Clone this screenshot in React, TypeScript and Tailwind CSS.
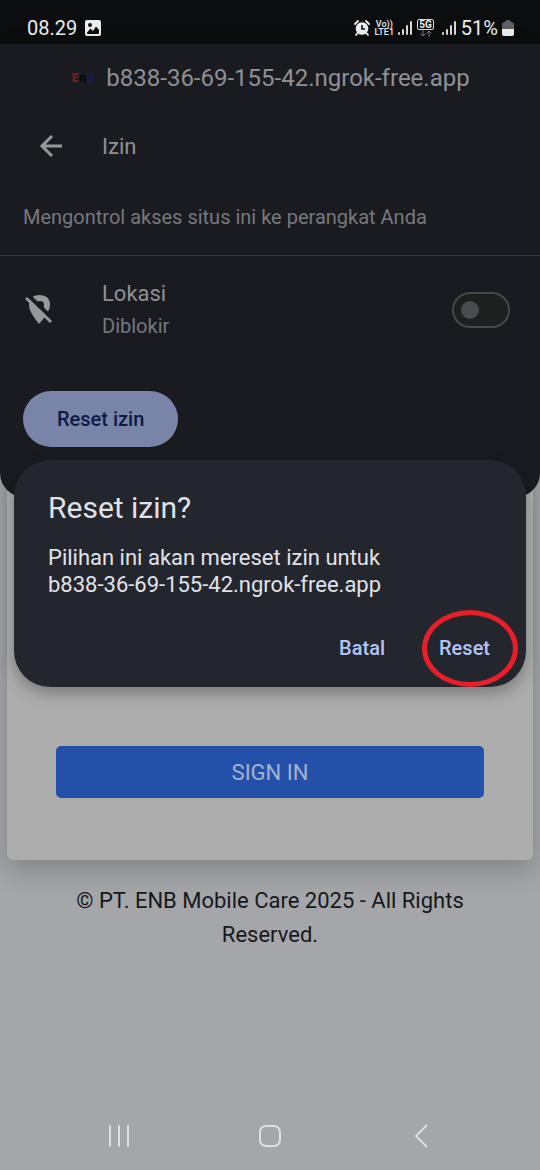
import React from "react";

const SignalBars: React.FC = () => (
  <svg width="15" height="16" viewBox="0 0 15 16" fill="#d6d7d9" aria-hidden="true">
    <rect x="0" y="12" width="2" height="3" rx="1" />
    <rect x="4" y="9" width="2" height="6" rx="1" />
    <rect x="8" y="5" width="2" height="10" rx="1" />
    <rect x="12" y="1" width="2" height="14" rx="1" />
  </svg>
);

const StatusBar: React.FC = () => {
  return (
    <header className="flex h-11 items-end justify-between bg-[#0b0d0f] pr-[26px] pb-1 pl-[27px] text-[#eceded]">
      <div className="flex h-6 items-center gap-2">
        <span className="text-xl">08.29</span>
        <svg width="16" height="16" viewBox="0 0 16 16" aria-hidden="true">
          <rect width="16" height="16" rx="2" fill="#eceded" />
          <circle cx="5" cy="5" r="2" fill="#0b0d0f" />
          <path d="M2 12.5 L5.5 8.5 L8 11 L11 6.5 L14 10 V13 Q14 14 13 14 H3 Q2 14 2 13 Z" fill="#0b0d0f" />
        </svg>
      </div>
      <div className="flex h-6 items-center">
        <svg width="16" height="16" viewBox="0 0 16 16" aria-hidden="true">
          <circle cx="8" cy="8.5" r="6.3" fill="#eceded" />
          <path
            d="M1 4 L4 1 M15 4 L12 1 M3.6 13 L2 15 M12.4 13 L14 15"
            stroke="#eceded"
            strokeWidth="1.8"
            strokeLinecap="round"
          />
          <path d="M8 5 V9 H11" stroke="#0b0d0f" strokeWidth="1.6" fill="none" />
        </svg>
        <span className="mr-1 ml-1 flex w-5 flex-col items-center text-[9px] leading-[8px] font-medium">
          <span>Vo))</span>
          <span>LTE1</span>
        </span>
        <SignalBars />
        <span className="mr-2 ml-1 flex flex-col items-center">
          <span className="rounded-xs border border-[#d6d7d9] px-px text-[10px] leading-[9px] font-bold">5G</span>
          <svg width="12" height="7" viewBox="0 0 12 7" fill="none" stroke="#77797c" aria-hidden="true">
            <path d="M3 0 V6 M0.5 3.5 L3 6 L5.5 3.5 M9 7 V1 M6.5 3.5 L9 1 L11.5 3.5" />
          </svg>
        </span>
        <SignalBars />
        <span className="ml-1 text-xl">51%</span>
        <svg className="ml-1" width="12" height="16" viewBox="0 0 12 16" aria-hidden="true">
          <path d="M3 2 Q3 0 6 0 Q9 0 9 2 Q12 2 12 5 V9 H0 V5 Q0 2 3 2 Z" fill="#5d5f62" />
          <path d="M0 9 H12 V14 Q12 16 10 16 H2 Q0 16 0 14 Z" fill="#eceded" />
        </svg>
      </div>
    </header>
  );
};

const PermissionSheet: React.FC = () => {
  return (
    <section className="absolute inset-x-0 top-0 rounded-b-3xl bg-[#1a1b20] pb-[50px] text-[#8f9094]">
      <div className="flex h-[68px] items-center justify-center gap-2.5">
        <span
          className="flex w-[26px] items-center justify-center text-[13px] leading-3 font-black"
          role="img"
          aria-label="ENB"
        >
          <span className="text-[#6e2024]">E</span>
          <span className="text-[#08080a]">n</span>
          <span className="text-[#171a50]">B</span>
        </span>
        <span className="text-2xl">b838-36-69-155-42.ngrok-free.app</span>
      </div>
      <div className="flex h-[68px] items-center gap-9 pl-9">
        <button type="button" aria-label="Kembali" className="flex size-[30px] items-center justify-center">
          <svg width="24" height="24" viewBox="0 0 24 24" fill="none" stroke="#97989b" strokeWidth="3" aria-hidden="true">
            <path d="M23 12 H3 M13 2 L3 12 L13 22" />
          </svg>
        </button>
        <h1 className="text-[22px]">Izin</h1>
      </div>
      <p className="border-b border-[#35363b] pt-6 pb-6 pl-[23px] text-xl leading-[27px] text-[#77787c]">
        Mengontrol akses situs ini ke perangkat Anda
      </p>
      <div className="flex items-center pt-[22px] pr-[30px] pl-[25px]">
        <svg width="28" height="30" viewBox="0 0 28 30" aria-hidden="true">
          <path d="M14 0 Q25 0 25 10 Q25 17 14 29 Q4 17 4 10 Q4 0 14 0 Z" fill="#97989b" />
          <circle cx="15" cy="10" r="4" fill="#1a1b20" />
          <path d="M3 0 H9 L5 4 Z" fill="#1a1b20" />
          <path d="M4 1 L29 25" stroke="#1a1b20" strokeWidth="4" />
          <path d="M1 3 L26 27" stroke="#97989b" strokeWidth="3" />
        </svg>
        <label htmlFor="lokasi" className="ml-[49px] flex-1">
          <span className="block text-[22px] leading-8">Lokasi</span>
          <span className="block text-xl leading-8 text-[#77787c]">Diblokir</span>
        </label>
        <input
          id="lokasi"
          type="checkbox"
          role="switch"
          className="h-9 w-[58px] appearance-none rounded-full border-2 border-[#47484c] bg-[#1e201f] before:mt-[7px] before:ml-[7px] before:block before:size-[18px] before:rounded-full before:bg-[#4b4c51]"
        />
      </div>
      <button
        type="button"
        className="mt-[49px] ml-[23px] h-14 rounded-full bg-[#7984a9] px-[34px] text-xl font-medium text-[#0e1a47]"
      >
        Reset izin
      </button>
    </section>
  );
};

const ResetDialog: React.FC = () => {
  return (
    <div className="absolute inset-0 flex items-center px-3.5">
      <div
        role="dialog"
        aria-labelledby="reset-title"
        className="w-full rounded-[36px] bg-[#24262d] px-[34px] pt-7 pb-[19px] text-[#e1e2e8] shadow-[0_6px_16px_rgba(0,0,0,0.3)]"
      >
        <h2 id="reset-title" className="text-[30px] leading-10">
          Reset izin?
        </h2>
        <p className="mt-4 text-[22px] leading-[27px]">
          Pilihan ini akan mereset izin untuk
          <br />
          b838-36-69-155-42.ngrok-free.app
        </p>
        <div className="mt-[30px] flex justify-end gap-[54px] text-xl font-medium text-[#b4c4f6]">
          <button type="button" className="h-10">
            Batal
          </button>
          <button type="button" className="relative mr-0.5 h-10">
            Reset
            <span className="absolute -top-[18px] -right-7 h-[77px] w-24 rounded-[50%] border-[5px] border-[#e71f28]" />
          </button>
        </div>
      </div>
    </div>
  );
};

const LoginPage: React.FC = () => {
  return (
    <>
      <div className="mx-[7px] flex min-h-[816px] flex-col justify-end rounded-b-md bg-[#adadad] px-[49px] pb-[62px] shadow-[0_10px_28px_rgba(0,0,0,0.22)]">
        <button type="button" className="h-[52px] rounded-[5px] bg-[#2351a9] text-[22px] text-[#a4b1ce]">
          SIGN IN
        </button>
      </div>
      <footer className="mt-6 px-12 text-center text-[22px] leading-[34px] text-[#17181b]">
        © PT. ENB Mobile Care 2025 - All Rights Reserved.
      </footer>
    </>
  );
};

const NavigationBar: React.FC = () => {
  return (
    <nav className="flex h-[67px] items-center justify-around px-[43px] pb-0.5 text-[#dfe0e2]">
      <button type="button" aria-label="Aplikasi terbaru">
        <svg width="24" height="24" viewBox="0 0 24 24" stroke="currentColor" strokeWidth="2" strokeLinecap="round">
          <path d="M3 2 V22 M12 2 V22 M21 2 V22" />
        </svg>
      </button>
      <button type="button" aria-label="Beranda">
        <svg width="24" height="24" viewBox="0 0 24 24" fill="none" stroke="currentColor" strokeWidth="2">
          <rect x="2" y="2" width="20" height="20" rx="6" />
        </svg>
      </button>
      <button type="button" aria-label="Kembali ke layar sebelumnya">
        <svg width="24" height="24" viewBox="0 0 24 24" fill="none" stroke="currentColor" strokeWidth="2">
          <path d="M18 1 L7 12 L18 23" />
        </svg>
      </button>
    </nav>
  );
};

const App: React.FC = () => {
  return (
    <div className="flex min-h-screen flex-col bg-[#a5a6aa] font-['Roboto','Liberation_Sans',sans-serif]">
      <StatusBar />
      <main className="relative flex-1">
        <LoginPage />
        <PermissionSheet />
        <ResetDialog />
      </main>
      <NavigationBar />
    </div>
  );
};

export default App;
